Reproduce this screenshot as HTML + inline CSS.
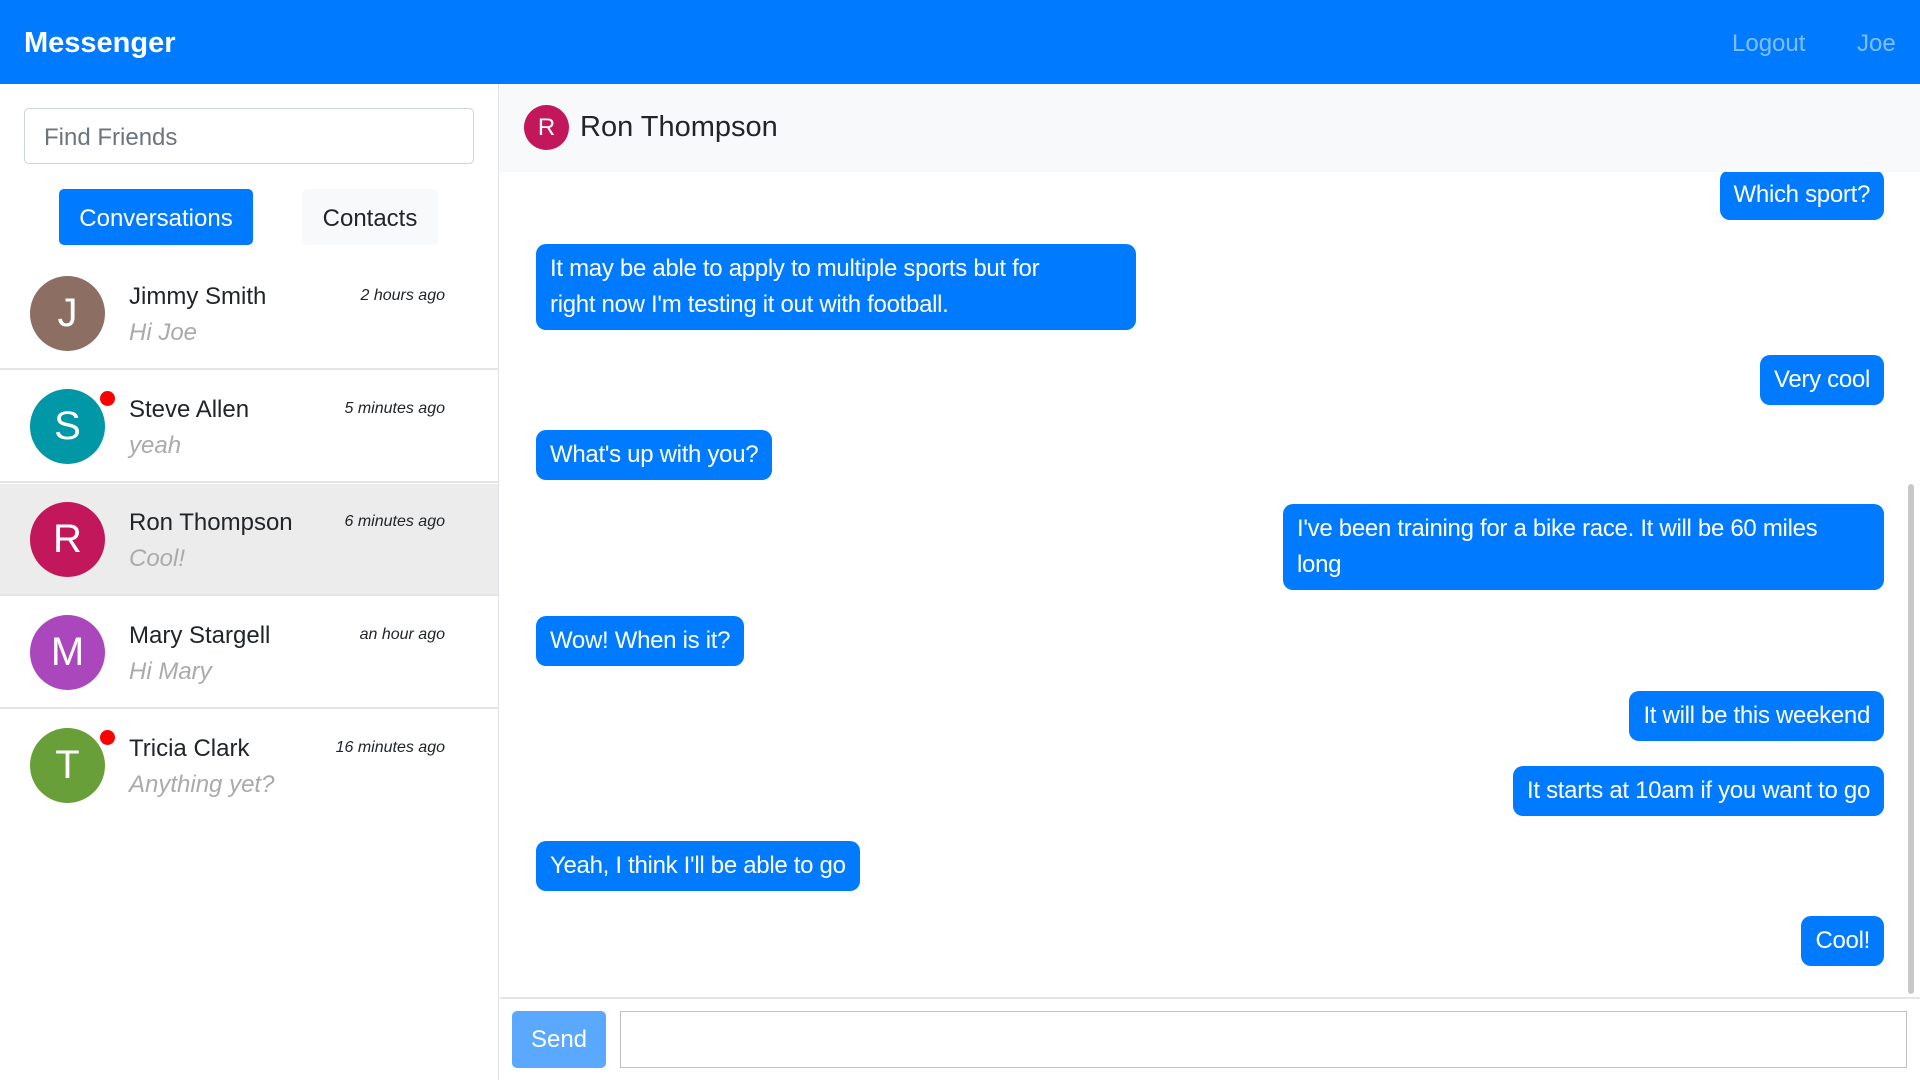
<!DOCTYPE html>
<html><head><meta charset="utf-8"><style>
*{box-sizing:border-box;margin:0;padding:0}
body{width:1920px;height:1080px;overflow:hidden;font-family:"Liberation Sans",sans-serif;background:#fff;position:relative;color:#212529}
.hdr{position:absolute;left:0;top:0;width:1920px;height:84px;background:#007bff}
.brand{position:absolute;left:24px;top:27px;font-size:29px;font-weight:bold;color:#fff}
.nav{position:absolute;top:30px;font-size:24px;color:rgba(255,255,255,.5)}
.side{position:absolute;left:0;top:84px;width:499px;height:996px;border-right:1px solid #dee2e6}
.search{position:absolute;left:24px;top:24px;width:450px;height:56px;border:1px solid #ced4da;border-radius:5px;font-size:24px;color:#6c757d;padding:15px 19px}
.btn{position:absolute;top:105px;height:56px;border-radius:5px;font-size:24px;padding-top:16px;text-align:center}
.item{position:absolute;left:0;width:498px;height:112px;border-bottom:2px solid #e5e5e5}
.av{position:absolute;left:30px;top:18px;width:75px;height:75px;border-radius:50%;color:#fff;font-size:40px;text-align:center;line-height:75px}
.nm{position:absolute;left:129px;top:25px;font-size:24px}
.pv{position:absolute;left:129px;top:61px;font-size:24px;font-style:italic;color:#aaa}
.tm{position:absolute;right:53px;top:29px;font-size:16px;font-style:italic}
.dot{position:absolute;left:100px;top:20px;width:15px;height:15px;border-radius:50%;background:#f00}
.chdr{position:absolute;left:500px;top:84px;width:1420px;height:88px;background:#f8f9fa}
.b{position:absolute;background:#007bff;color:#fff;font-size:24px;border-radius:10px;padding:7px 14px;line-height:36px;white-space:nowrap;letter-spacing:-0.3px}
.r{right:36px}.l{left:536px}
</style></head><body>
<div class="hdr"><div class="brand">Messenger</div><div class="nav" style="left:1732px">Logout</div><div class="nav" style="left:1857px">Joe</div></div>
<div class="side">
<div class="search">Find Friends</div>
<div class="btn" style="left:59px;width:194px;background:#007bff;color:#fff">Conversations</div>
<div class="btn" style="left:302px;width:136px;background:#f8f9fa">Contacts</div>
<div class="item" style="top:174px"><div class="av" style="background:#8d6e63">J</div><div class="nm">Jimmy Smith</div><div class="pv">Hi Joe</div><div class="tm">2 hours ago</div></div>
<div class="item" style="top:287px"><div class="av" style="background:#0097a7">S</div><div class="dot"></div><div class="nm">Steve Allen</div><div class="pv">yeah</div><div class="tm">5 minutes ago</div></div>
<div class="item" style="top:400px;background:#ececec"><div class="av" style="background:#c2185b">R</div><div class="nm">Ron Thompson</div><div class="pv">Cool!</div><div class="tm">6 minutes ago</div></div>
<div class="item" style="top:513px"><div class="av" style="background:#ab47bc">M</div><div class="nm">Mary Stargell</div><div class="pv">Hi Mary</div><div class="tm">an hour ago</div></div>
<div class="item" style="top:626px;border-bottom:none"><div class="av" style="background:#689f38">T</div><div class="dot"></div><div class="nm">Tricia Clark</div><div class="pv">Anything yet?</div><div class="tm">16 minutes ago</div></div>
</div>
<div class="b r" style="top:170px">Which sport?</div>
<div class="chdr"><div style="position:absolute;left:24px;top:21px;width:45px;height:45px;border-radius:50%;background:#c2185b;color:#fff;font-size:24px;text-align:center;line-height:45px">R</div><div style="position:absolute;left:80px;top:27px;font-size:29px">Ron Thompson</div></div>
<div class="b l" style="top:244px;width:600px;white-space:normal;padding-right:60px">It may be able to apply to multiple sports but for right now I'm testing it out with football.</div>
<div class="b r" style="top:355px">Very cool</div>
<div class="b l" style="top:430px">What's up with you?</div>
<div class="b r" style="top:504px;width:601px;white-space:normal;padding-right:60px">I've been training for a bike race. It will be 60 miles long</div>
<div class="b l" style="top:616px">Wow! When is it?</div>
<div class="b r" style="top:691px">It will be this weekend</div>
<div class="b r" style="top:766px">It starts at 10am if you want to go</div>
<div class="b l" style="top:841px">Yeah, I think I'll be able to go</div>
<div class="b r" style="top:916px">Cool!</div>
<div style="position:absolute;left:1908px;top:484px;width:6px;height:510px;background:#c8c8c8;border-radius:3px"></div>
<div style="position:absolute;left:500px;top:997px;width:1420px;height:2px;background:#e5e5e5"></div>
<div style="position:absolute;left:512px;top:1011px;width:94px;height:57px;background:#5aa9ff;border-radius:5px;color:#fff;font-size:24px;text-align:center;line-height:57px">Send</div>
<div style="position:absolute;left:620px;top:1011px;width:1287px;height:57px;border:1px solid #c0c0c0"></div>
</body></html>
